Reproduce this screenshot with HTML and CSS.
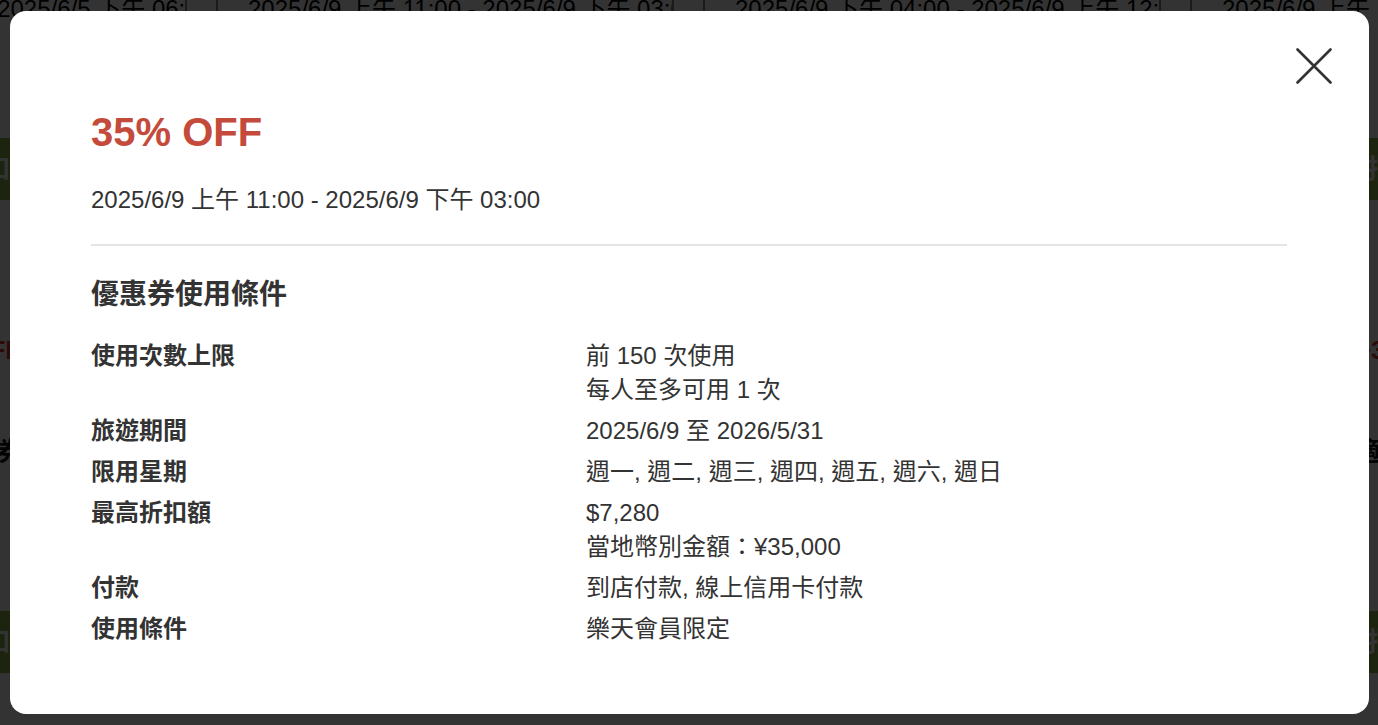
FILE: index.html
```html
<!DOCTYPE html>
<html lang="zh-Hant">
<head>
<meta charset="utf-8">
<title>優惠券</title>
<link rel="stylesheet" href="styles.css">
</head>
<body>
<div class="page">
  <div class="slots">
    <div class="slot">
      <div class="slot-date">2025/6/5 下午 03:00 - 2025/6/5 下午 06:00</div>
      <div class="slot-note">訂房</div>
      <div class="slot-btn">指定折扣</div>
      <div class="slot-price">−35% OFF</div>
      <div class="slot-label">適用優惠券</div>
      <div class="slot-note">訂房</div>
      <div class="slot-btn">指定折扣</div>
    </div>
    <div class="slot">
      <div class="slot-date">2025/6/9 上午 11:00 - 2025/6/9 下午 03:00</div>
      <div class="slot-note">訂房</div>
      <div class="slot-btn">指定折扣</div>
      <div class="slot-price">−35% OFF</div>
      <div class="slot-label">適用優惠券</div>
      <div class="slot-note">訂房</div>
      <div class="slot-btn">指定折扣</div>
    </div>
    <div class="slot">
      <div class="slot-date">2025/6/9 下午 04:00 - 2025/6/9 上午 12:00</div>
      <div class="slot-note">訂房</div>
      <div class="slot-btn">指定折扣</div>
      <div class="slot-price">−35% OFF</div>
      <div class="slot-label">適用優惠券</div>
      <div class="slot-note">訂房</div>
      <div class="slot-btn">指定折扣</div>
    </div>
    <div class="slot">
      <div class="slot-date">2025/6/9 上午 10:00 - 2025/6/9 下午 02:00</div>
      <div class="slot-note">訂房</div>
      <div class="slot-btn">指定折扣</div>
      <div class="slot-price">−35% OFF</div>
      <div class="slot-label">適用優惠券</div>
      <div class="slot-note">訂房</div>
      <div class="slot-btn">指定折扣</div>
    </div>
  </div>
</div>

<div class="overlay">
  <div class="modal" role="dialog" aria-label="優惠券使用條件">
    <button class="close" type="button" aria-label="關閉">
      <svg width="36" height="36" viewBox="0 0 36 36" aria-hidden="true">
        <path d="M1.5 1.5 L34.5 34.5 M34.5 1.5 L1.5 34.5" stroke="#333" stroke-width="2.6" stroke-linecap="round" fill="none"/>
      </svg>
    </button>
    <h2 class="title">35% OFF</h2>
    <p class="period">2025/6/9 上午 11:00 - 2025/6/9 下午 03:00</p>
    <hr class="divider">
    <h3 class="section-title">優惠券使用條件</h3>
    <dl class="conditions">
      <dt>使用次數上限</dt>
      <dd>前 150 次使用<br>每人至多可用 1 次</dd>
      <dt>旅遊期間</dt>
      <dd>2025/6/9 至 2026/5/31</dd>
      <dt>限用星期</dt>
      <dd>週一, 週二, 週三, 週四, 週五, 週六, 週日</dd>
      <dt>最高折扣額</dt>
      <dd>$7,280<br>當地幣別金額：¥35,000</dd>
      <dt>付款</dt>
      <dd>到店付款, 線上信用卡付款</dd>
      <dt>使用條件</dt>
      <dd>樂天會員限定</dd>
    </dl>
  </div>
</div>
</body>
</html>
```

FILE: styles.css
```css
* {
  box-sizing: border-box;
}

html,
body {
  margin: 0;
  height: 100%;
}

body {
  font-family: "Liberation Sans", "Noto Sans CJK TC", sans-serif;
  color: #333;
  background: #fff;
  overflow: hidden;
}

/* ---------- page behind the dialog ---------- */
.slots {
  display: flex;
  gap: 29px;
  margin-left: -271px;
  margin-top: -6px;
}

.slot {
  flex: 0 0 458px;
  min-width: 0;
  overflow: hidden;
  display: flex;
  flex-direction: column;
}

.slot-date {
  border-left: 2px solid #888;
  border-right: 2px solid #888;
  font-size: 24px;
  line-height: 30px;
  padding-left: 30px;
  white-space: nowrap;
  overflow: hidden;
  color: #000;
}

.slot-note {
  margin-top: 44px;
  font-size: 22px;
  line-height: 28px;
  color: #666;
  text-align: center;
}

.slot-btn {
  margin-top: 42px;
  height: 62px;
  background: #8cb04e;
  color: #fff;
  font-size: 26px;
  font-weight: 700;
  line-height: 62px;
  text-align: center;
}

.slot-price {
  margin-top: 134px;
  font-size: 26px;
  font-weight: 700;
  line-height: 32px;
  color: #d23a2e;
  text-align: center;
}

.slot-label {
  margin-top: 70px;
  font-size: 26px;
  font-weight: 700;
  line-height: 32px;
  color: #111;
  text-align: center;
}

.slot-label + .slot-note {
  margin-top: 80px;
}

.slot-label + .slot-note + .slot-btn {
  margin-top: 35px;
}

/* ---------- overlay + dialog ---------- */
.overlay {
  position: fixed;
  inset: 0;
  background: rgba(0, 0, 0, 0.8);
  display: flex;
  padding: 11px 9px 11px 10px;
}

.modal {
  flex: 1;
  position: relative;
  background: #fff;
  border-radius: 16px;
  padding: 97px 82px 0 81px;
}

.close {
  position: absolute;
  top: 37px;
  right: 37px;
  width: 36px;
  height: 36px;
  padding: 0;
  border: 0;
  background: none;
  cursor: pointer;
}

.close svg {
  display: block;
}

.title {
  margin: 0;
  font-size: 40px;
  font-weight: 700;
  line-height: 48px;
  color: #c44b3b;
}

.period {
  margin: 27px 0 0;
  font-size: 24px;
  line-height: 34px;
}

.divider {
  margin: 27px 0 0;
  border: 0;
  height: 2px;
  background: #e4e4e4;
}

.section-title {
  margin: 29px 0 0;
  font-size: 28px;
  font-weight: 700;
  line-height: 40px;
}

.conditions {
  margin: 24px 0 0;
  display: grid;
  grid-template-columns: 495px 1fr;
  row-gap: 7px;
  font-size: 24px;
  line-height: 34px;
}

.conditions dt {
  font-weight: 700;
}

.conditions dd {
  margin: 0;
}
```
